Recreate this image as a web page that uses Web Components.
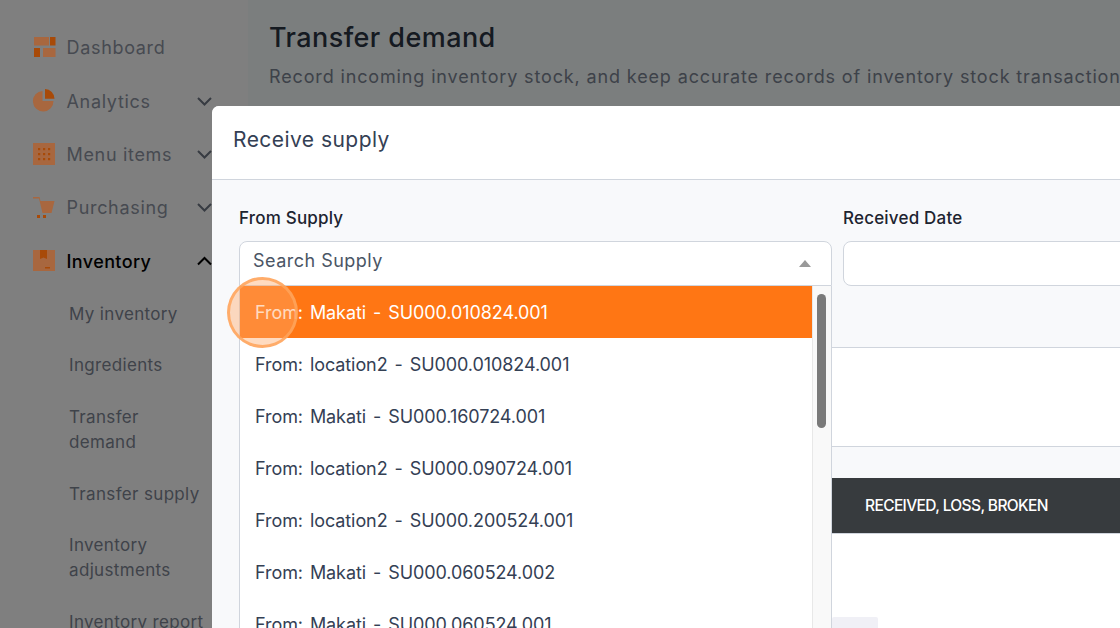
<!DOCTYPE html>
<html>
<head>
<meta charset="utf-8">
<title>Transfer demand</title>
<style>
  html, body { margin: 0; height: 100%; overflow: hidden; }
  body { font-family: Inter, "Liberation Sans", sans-serif; }
</style>
</head>
<body>
<app-shell>
  <side-nav slot="nav">
    <nav-item label="Dashboard" icon="dashboard"></nav-item>
    <nav-item label="Analytics" icon="pie" chevron="down"></nav-item>
    <nav-item label="Menu items" icon="menu" chevron="down"></nav-item>
    <nav-item label="Purchasing" icon="cart" chevron="down"></nav-item>
    <nav-item label="Inventory" icon="box" chevron="up" active></nav-item>
    <nav-sub>My inventory</nav-sub>
    <nav-sub>Ingredients</nav-sub>
    <nav-sub>Transfer<br>demand</nav-sub>
    <nav-sub>Transfer supply</nav-sub>
    <nav-sub>Inventory<br>adjustments</nav-sub>
    <nav-sub>Inventory report</nav-sub>
  </side-nav>
  <page-head slot="main" heading="Transfer demand">Record incoming inventory stock, and keep accurate records of inventory stock transactions</page-head>
  <receive-modal slot="modal" heading="Receive supply">
    <supply-option selected>From: Makati - SU000.010824.001</supply-option>
    <supply-option>From: location2 - SU000.010824.001</supply-option>
    <supply-option>From: Makati - SU000.160724.001</supply-option>
    <supply-option>From: location2 - SU000.090724.001</supply-option>
    <supply-option>From: location2 - SU000.200524.001</supply-option>
    <supply-option>From: Makati - SU000.060524.002</supply-option>
    <supply-option>From: Makati - SU000.060524.001</supply-option>
  </receive-modal>
</app-shell>

<script>
// small helper so every element gets an open shadow root
const mount = (el, html) => {
  el.attachShadow({ mode: 'open' });
  el.shadowRoot.innerHTML = html;
};

const ICONS = {
  dashboard: `<svg width="24" height="22" viewBox="0 0 24 22">
    <rect x="1" y="0" width="15" height="8.500" fill="var(--light)"/>
    <rect x="17" y="0" width="5.500" height="8.500" fill="var(--dark)"/>
    <rect x="1" y="11" width="6" height="9" fill="var(--dark)"/>
    <rect x="10" y="11" width="12.500" height="9" fill="var(--light)"/>
  </svg>`,
  pie: `<svg width="24" height="22" viewBox="0 0 24 22">
    <path d="M9.500 .9A10.300 10.300 0 1 0 20.500 11H9.500Z" fill="var(--light)"/>
    <path d="M12 -1A9.700 9.700 0 0 1 21.500 8.700H12Z" fill="var(--dark)"/>
  </svg>`,
  menu: `<svg width="22" height="22" viewBox="0 0 22 22">
    <rect width="22" height="22" fill="var(--light)"/>
    <g fill="var(--dark)">
      <rect x="5" y="5" width="2.200" height="2.200"/><rect x="10" y="5" width="2.200" height="2.200"/><rect x="15" y="5" width="2.200" height="2.200"/>
      <rect x="5" y="10" width="2.200" height="2.200"/><rect x="10" y="10" width="2.200" height="2.200"/><rect x="15" y="10" width="2.200" height="2.200"/>
      <rect x="5" y="15" width="2.200" height="2.200"/><rect x="10" y="15" width="2.200" height="2.200"/><rect x="15" y="15" width="2.200" height="2.200"/>
    </g>
  </svg>`,
  cart: `<svg width="24" height="22" viewBox="0 0 24 22">
    <path d="M0 0H6.500L7.500 4H21.500L18.500 16H9.500L6 1.500H0Z" fill="var(--light)"/>
    <rect x="4" y="18" width="3" height="3" fill="var(--dark)"/>
    <rect x="10" y="18" width="3" height="3" fill="var(--dark)"/>
  </svg>`,
  box: `<svg width="22" height="22" viewBox="0 0 22 22">
    <rect width="22" height="21" fill="var(--light)"/>
    <path d="M7 0H14V9L10.500 7.500L7 9Z" fill="var(--dark)"/>
    <rect x="12" y="17" width="5" height="1.500" fill="var(--dark)"/>
  </svg>`
};

const CHEVRONS = {
  down: 'M1 1L7.500 7.500L14 1',
  up: 'M1 7.500L7.500 1L14 7.500'
};

class AppShell extends HTMLElement {
  constructor() {
    super();
    mount(this, `
      <style>
        :host { display: flex; width: 100vw; height: 100vh; position: relative; overflow: hidden; background: #fff; }
        .nav { width: 248px; flex: none; background: #fff; }
        .main { flex: 1; min-width: 0; background: #f7fcfc; }
        .backdrop { position: absolute; inset: 0; background: rgba(0, 0, 0, .5); }
      </style>
      <div class="nav"><slot name="nav"></slot></div>
      <div class="main"><slot name="main"></slot></div>
      <div class="backdrop"></div>
      <slot name="modal"></slot>
    `);
  }
}

class SideNav extends HTMLElement {
  constructor() {
    super();
    mount(this, `
      <style>
        :host { display: block; padding: 21px 36px 0 33px; }
      </style>
      <slot></slot>
    `);
  }
}

class NavItem extends HTMLElement {
  constructor() {
    super();
    const chevron = this.getAttribute('chevron');
    const icon = ICONS[this.getAttribute('icon')];
    mount(this, `
      <style>
        :host {
          display: flex; align-items: center; height: 53.4px;
          font-size: 18px; letter-spacing: .68px; color: #8e95a3;
          --light: #a8673f; --dark: #a84a08;
        }
        :host([active]) { color: #000; font-weight: 500; letter-spacing: .4px; }
        svg { display: block; overflow: visible; }
        /* the icons keep more colour than the dimmed page around them */
        .icon { width: 33.500px; flex: none; position: relative; z-index: 1; }
        .label { flex: 1; white-space: nowrap; }
        .chev { flex: none; }
      </style>
      <span class="icon">${icon}</span>
      <span class="label">${this.getAttribute('label')}</span>
      ${chevron ? `<svg class="chev" width="15" height="9" viewBox="0 0 15 9"><path d="${CHEVRONS[chevron]}" fill="none" stroke="${this.hasAttribute('active') ? '#000' : '#6e7684'}" stroke-width="2"/></svg>` : ''}
    `);
  }
}

class NavSub extends HTMLElement {
  constructor() {
    super();
    mount(this, `
      <style>
        :host {
          display: block; padding: 13.700px 0 13px 36px;
          font-size: 17px; line-height: 25px; letter-spacing: .34px; color: #7f8694;
          white-space: nowrap;
        }
      </style>
      <slot></slot>
    `);
  }
}

class PageHead extends HTMLElement {
  constructor() {
    super();
    mount(this, `
      <style>
        :host { display: block; padding: 21px 0 0 21px; white-space: nowrap; }
        h1 { margin: 0; font-size: 27px; line-height: 34px; font-weight: 500; color: #2b3443; letter-spacing: .42px; }
        p { margin: 8px 0 0; font-size: 18px; line-height: 27px; letter-spacing: .86px; color: #7b8493; }
      </style>
      <h1>${this.getAttribute('heading')}</h1>
      <p><slot></slot></p>
    `);
  }
}

class ReceiveModal extends HTMLElement {
  constructor() {
    super();
    mount(this, `
      <style>
        :host {
          position: absolute; left: 212px; top: 106px; width: 1000px; height: 600px;
          display: flex; flex-direction: column;
          background: #f8f9fb; border-radius: 7px 7px 0 0; overflow: hidden; color: #344054;
        }
        header {
          height: 67px; flex: none; display: flex; align-items: center; padding: 0 0 6px 21px;
          background: #fff; border-bottom: 1px solid #d0d5dd;
          font-size: 21px; letter-spacing: .45px; color: #344054;
        }
        .body { padding: 26px 0 0 27px; flex: 1; display: flex; flex-direction: column; }
        .fields { display: grid; grid-template-columns: 593px 1fr; column-gap: 11px; }
        label { display: block; font-size: 17px; line-height: 24px; font-weight: 500; color: #1d2430; margin-bottom: 11px; letter-spacing: .2px; }
        .ctl { position: relative; }
        .input {
          box-sizing: border-box; height: 45px; background: #fff; border: 1px solid #d0d5dd; border-radius: 8px;
          display: flex; align-items: center; justify-content: space-between; padding: 0 20px 0 13px;
          font-size: 18px; letter-spacing: .48px; color: #4a5565;
        }
        .input span:first-child { padding-bottom: 6px; }
        .open { border-radius: 8px 8px 0 0; }
        .caret { width: 0; height: 0; border: 6.500px solid transparent; border-top: 0; border-bottom: 7px solid #999; margin-top: 0; }
        .list {
          position: absolute; z-index: 2; left: 0; top: 80px; width: 593px; height: 400px; box-sizing: border-box;
          background: #fff; border: 1px solid #d0d5dd; border-width: 0 1px 0 1px;
          display: flex; overflow: hidden;
        }
        .options { flex: 1; min-width: 0; }
        .track { width: 19px; flex: none; background: #f9f9f9; border-left: 1px solid #e8e8e8; box-sizing: border-box; padding: 8px 0 0 4px; }
        .thumb { width: 9px; height: 134px; border-radius: 5px; background: #7a7a7a; }
        .note { box-sizing: border-box; height: 100px; margin-top: 61px; background: #fff; border: 1px solid #d0d5dd; border-width: 1px 0; flex: none; }
        .table-head {
          box-sizing: border-box; height: 56px; margin-top: 31px; background: #373b3e; border-bottom: 1px solid #d0d5dd; flex: none;
          display: flex; align-items: center; padding-left: 626px;
          font-size: 15.500px; letter-spacing: -.62px; font-weight: 500; color: #fff; white-space: nowrap;
        }
        .table-body { flex: 1; background: #fff; }
        .chip { width: 46px; height: 30px; margin: 83px 0 0 593px; background: #f0f0f6; border-radius: 2px 2px 0 0; }
        .spot {
          position: absolute; z-index: 3; left: 15px; top: 171px; width: 71px; height: 71px; box-sizing: border-box;
          border-radius: 50%; background: rgba(255, 170, 105, .42); border: 3px solid rgba(255, 164, 92, .85);
        }
      </style>
      <header>${this.getAttribute('heading')}</header>
      <div class="body">
        <div class="fields">
          <div class="ctl">
            <label>From Supply</label>
            <div class="input open"><span>Search Supply</span><span class="caret"></span></div>
            <div class="list">
              <div class="options"><slot></slot></div>
              <div class="track"><div class="thumb"></div></div>
            </div>
          </div>
          <div class="ctl">
            <label>Received Date</label>
            <div class="input"></div>
          </div>
        </div>
        <div class="note"></div>
        <div class="table-head">RECEIVED, LOSS, BROKEN</div>
        <div class="table-body"><div class="chip"></div></div>
      </div>
      <div class="spot"></div>
    `);
  }
}

class SupplyOption extends HTMLElement {
  constructor() {
    super();
    mount(this, `
      <style>
        :host {
          display: flex; align-items: center; height: 52px; padding-left: 15px;
          font-size: 18px; letter-spacing: -.08px; word-spacing: 2px; color: #344054; white-space: nowrap;
        }
        :host([selected]) { background: #ff7614; color: #fff; }
      </style>
      <slot></slot>
    `);
  }
}

customElements.define('app-shell', AppShell);
customElements.define('side-nav', SideNav);
customElements.define('nav-item', NavItem);
customElements.define('nav-sub', NavSub);
customElements.define('page-head', PageHead);
customElements.define('receive-modal', ReceiveModal);
customElements.define('supply-option', SupplyOption);
</script>
</body>
</html>
